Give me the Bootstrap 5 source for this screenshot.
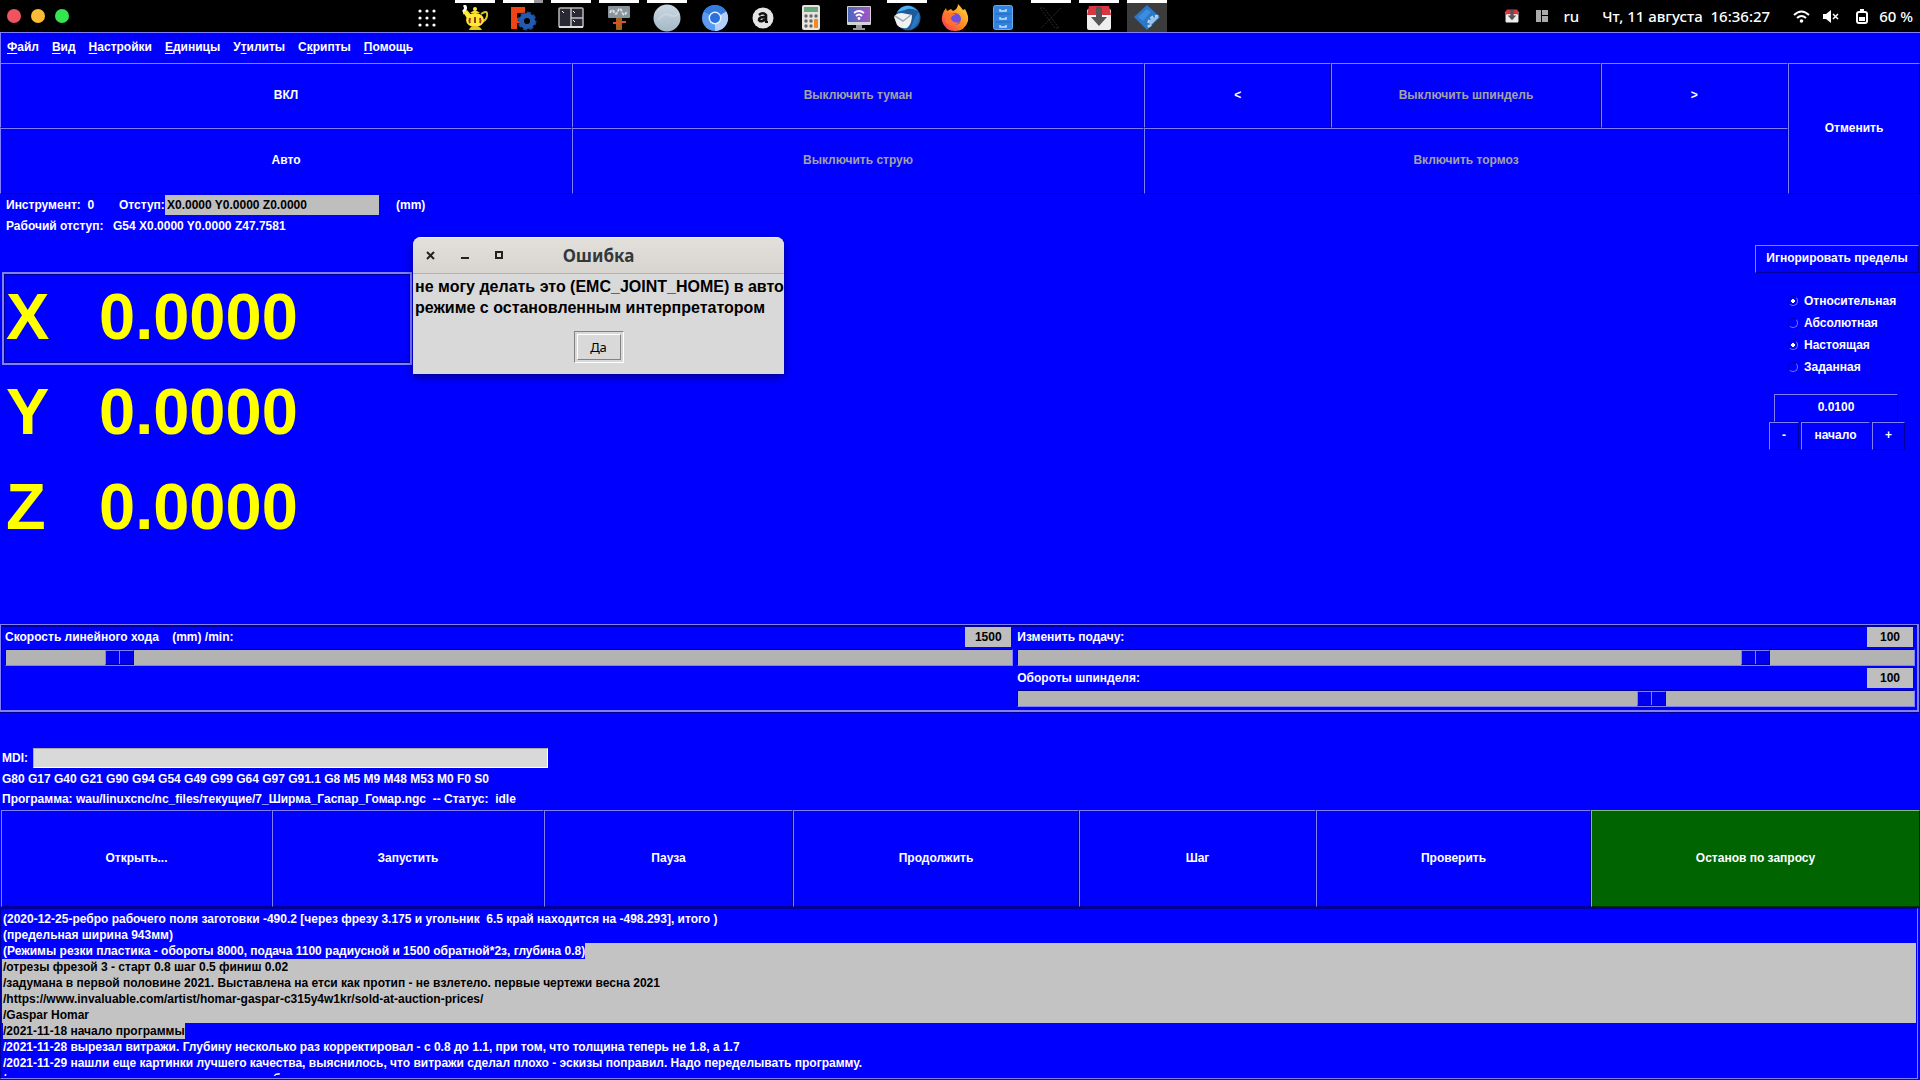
<!DOCTYPE html>
<html lang="ru">
<head>
<meta charset="utf-8">
<meta name="viewport" content="width=device-width, initial-scale=1">
<title>LinuxCNC</title>
<link href="https://cdn.jsdelivr.net/npm/bootstrap@5.3.0/dist/css/bootstrap.min.css" rel="stylesheet">
<style>
:root{--hi:#8080ff;--lo:#000099;--blue:#0000ff}
body{background:var(--blue);color:#fff;font:bold 12px/16px "Liberation Sans",Arial,sans-serif;min-height:100vh;overflow:hidden}
button,input{font:inherit;color:inherit;border-radius:0}
.topbar{height:32px;background:#000;font:500 15px/20px "Noto Sans",sans-serif}
.lights{flex:0 0 407px;padding-left:7px;gap:10px}
.dock{flex:none}
.tray{padding-right:7px}
.tray svg,.dock svg{display:block}
.dot{width:14px;height:14px;border-radius:50%;border:0;padding:0}
.dock a{width:40px;height:32px;display:flex;justify-content:center;align-items:center;border-top:3px solid transparent}
.dock a.run{border-top-color:#fff}
.dock a.cur{background:#3c3c3c}
.dock a.multi{border-image:linear-gradient(90deg,#fff 78%,#999 78%) 3 0 0 0}
.menus{height:31px;border-top:1px solid var(--hi);border-left:1px solid var(--hi);padding:0 6px 2px;gap:13px}
.menus a{color:#fff;text-decoration:none}
.menus u{text-underline-offset:2px}
.tk{background:var(--blue);border:1px solid;border-color:var(--hi) var(--lo) var(--lo) var(--hi);padding:0 0 2px;text-align:center;min-width:0}
.tk:disabled{color:#a3a3a3}
.tops{display:grid;grid-template-columns:572fr 572fr 644fr 132fr}
.pair{display:grid;grid-template-rows:65px 66px}
.spin{display:grid;grid-template-columns:187fr 269fr 187fr}
.offs{height:20px;width:214px;background:#bebebe;color:#000;border:0;padding:0 2px}
.info{padding-left:6px}
.dro{width:410px;margin-left:2px}
.axis{height:93px;margin-bottom:2px;border:2px solid transparent;padding:0 2px;font-size:65px;line-height:86px;color:#ff0;display:grid;grid-template-columns:93px 1fr}
.axis.sel{border-color:var(--hi);box-shadow:inset 1px 1px var(--lo),inset -1px -1px var(--lo)}
.panel2{padding-top:51px;width:165px}
.panel2 .lim{height:28px;width:164px}
.radios{margin:17px 0 0 33px}
.radios label{height:22px;display:flex;align-items:center;gap:6px}
.radios input{appearance:none;width:10px;height:10px;margin:0;border:1px solid;border-radius:50%;border-color:#0000b8 #7878ff #7878ff #0000b8;background:radial-gradient(circle,#fff 2px,transparent 2px) no-repeat}
.radios input:not(:checked){background:none}
.jog{margin:16px 0 0 14px;width:136px}
.jog .inc{height:27px;width:124px;margin-left:5px}
.jog .tk{height:28px}
.ovr{border:2px solid var(--hi);border-top-width:1px;border-left-width:1px;box-shadow:inset 1px 2px var(--lo),0 1px var(--lo);display:grid;grid-template-columns:1016fr 902fr;padding:1px 2px 4px 3px;height:88px;margin-right:1px}
.ovr .cap{height:21px;padding-left:1px}
.valbox{background:#bebebe;color:#000;width:46px;height:20px;line-height:20px;text-align:center;margin-right:2px}
.tkscale{appearance:none;display:block;background:#b3b3b3;height:17px;border:1px solid;border-color:var(--lo) var(--hi) var(--hi) var(--lo);margin:2px 0 1px 1px;padding:0;width:calc(100% - 1px)}
.tkscale::-webkit-slider-thumb{appearance:none;width:29px;height:15px;border:1px solid;border-color:var(--hi) var(--lo) var(--lo) var(--hi);background:linear-gradient(90deg,transparent 13px,var(--hi) 13px,var(--hi) 14px,transparent 14px),#0000ee}
.mdi{height:20px;width:515px;background:#d9d9d9;border:1px solid;border-color:#aaa #fff #fff #aaa;color:#000}
.runs{display:grid;grid-template-columns:271fr 272fr 249fr 286fr 237fr 275fr 329fr;height:98px;padding-left:1px;border-bottom:1px solid var(--lo)}
.runs .go{background:#006400;border-color:#7bbf7b #003200 #003200 #7bbf7b}
.prog{height:171px;border:1px solid;border-color:var(--lo) var(--hi) var(--hi) var(--lo);margin:0 2px 1px 0;padding:2px 1px 0;overflow:hidden}
.prog pre{font:inherit;margin:0;height:165px;overflow:hidden}
.prog span{display:block;height:16px;padding-left:1px;color:#fff}
.prog .g{background:#c3c3c3;color:#000}
.prog b{display:inline-block;height:16px}
.prog .g b{background:var(--blue);color:#fff}
.prog .e b{background:#c3c3c3;color:#000}
.errwin{position:absolute;left:413px;top:237px;width:371px;height:137px;background:#d9d9d9;color:#000;border-radius:8px 8px 0 0;box-shadow:0 3px 9px #0007;overflow:hidden}
.errhead{height:37px;background:linear-gradient(#e3e0dc,#d8d4d0);border-top:1px solid #f5f3f0;border-bottom:1px solid #b5b1ac;color:#33393b;position:relative;font:bold 17px/36px "Noto Sans",sans-serif;text-align:center}
.errhead div{position:absolute;left:12px;top:12px}
.errhead button{border:0;background:none;padding:0;width:12px;height:12px;line-height:0}
.errmsg{font-size:16px;line-height:21px;padding:2px 0 0 2px;white-space:pre;margin:0}
.okring{width:50px;height:32px;margin:13px auto 0;border:1px solid;border-color:#828282 #fff #fff #828282;padding:2px}
.okring button{width:100%;height:100%;background:#d9d9d9;border:1px solid;border-color:#fff #828282 #828282 #fff;padding:0;font:13px/20px "Noto Sans",sans-serif}
</style>
<script src="https://cdn.jsdelivr.net/npm/bootstrap@5.3.0/dist/js/bootstrap.bundle.min.js"></script>
</head>
<body class="d-flex flex-column">
<header class="topbar d-flex">
 <div class="lights d-flex align-items-center">
  <button class="dot" style="background:#ef5360" aria-label="Закрыть"></button><button class="dot" style="background:#fdbc35" aria-label="Свернуть"></button><button class="dot" style="background:#35e550" aria-label="Развернуть"></button>
 </div>
 <nav class="dock d-flex gap-2" aria-label="Док">
  <a href="#" aria-label="Приложения"><svg width="18" height="18" fill="#fff"><g id="r"><circle cx="2" cy="2" r="1.6"/><circle cx="9" cy="2" r="1.6"/><circle cx="16" cy="2" r="1.6"/></g><use href="#r" y="7"/><use href="#r" y="14"/></svg></a>
  <a class="run" href="#" aria-label="Чайник"><svg width="28" height="26"><path d="M3 0q3 3 0 6l1 3" stroke="#fff" stroke-width="3" fill="none"/><path d="M20 9q7-5 6 2-1 5-6 6" stroke="#d8c52b" stroke-width="2" fill="none"/><path d="M7 15L2 7 6 5l5 6z" fill="#ffe838"/><ellipse cx="14" cy="15" rx="9" ry="7" fill="#ffe838"/><path d="M9 8q5-5 10 0z" fill="#f9dc22"/><circle cx="14" cy="4" r="2" fill="#ffe838"/><path d="M8 25q1-4 6-4t7 4z" fill="#e6c91a"/><path d="M9 13q-1 3 0 5M14 12v6M19 13q1 3 0 5" stroke="#9f301b" stroke-width="2" fill="none"/></svg></a>
  <a class="run multi" href="#" aria-label="FreeCAD"><svg width="28" height="26"><path d="M2 2h14v6H8v5h6v5H8v6H2z" fill="#f04415"/><circle cx="18" cy="16" r="8" fill="none" stroke="#1d4a91" stroke-width="3" stroke-dasharray="4 2.2"/><circle cx="18" cy="16" r="5.5" fill="none" stroke="#245bae" stroke-width="5"/></svg></a>
  <a class="run" href="#" aria-label="Терминал"><svg width="26" height="22"><rect x="1" y="1" width="24" height="19" rx="1" fill="#292936" stroke="#b9b9b9" stroke-width="1.5"/><path d="M13 1v19M13 11h12" stroke="#c5c5c5" stroke-width="1.5"/><path d="M4 4l2 2M15 4l2 2M15 13l2 2" stroke="#fff"/><path d="M1 20h24" stroke="#ddd" stroke-width="2"/></svg></a>
  <a class="run" href="#" aria-label="Указатель"><svg width="24" height="26"><rect x="9" y="10" width="6" height="15" rx="1" fill="#a06325"/><rect x="1" y="1" width="22" height="12" rx="1" fill="#88949b"/><path d="M3 8q2-5 4-1t4-1 4 1 5-1" stroke="#ddd" stroke-width="2" fill="none" stroke-dasharray="3 1"/><path d="M6 18h5M14 17h5M11 20l2-4" stroke="#e94c25" stroke-width="2"/></svg></a>
  <a class="run" href="#" aria-label="Сфера"><svg width="28" height="28"><defs><linearGradient id="s" x2="0" y2="1"><stop stop-color="#cbd9e2"/><stop offset="1" stop-color="#a3b8c5"/></linearGradient></defs><circle cx="14" cy="14" r="13.5" fill="url(#s)"/><path d="M5 16q6-8 12-5t8-2" stroke="#d6e0e7" stroke-width="2" fill="none" opacity=".5"/></svg></a>
  <a href="#" aria-label="Chromium"><svg width="28" height="28"><circle cx="14" cy="14" r="13" fill="#5c99f0"/><path d="M14 14L2.700 7.500A13 13 0 0 1 25.300 7.500z" fill="#347be0"/><path d="M14 14l11.300-6.500A13 13 0 0 1 14 27z" fill="#b2cffa"/><circle cx="14" cy="14" r="6.500" fill="#e9f1ff"/><circle cx="14" cy="14" r="5" fill="#2b70dc"/></svg></a>
  <a href="#" aria-label="Amazon"><svg width="22" height="22"><circle cx="11" cy="11" r="10.500" fill="#e5e5e5"/><path d="M7 8q4-3.500 7 0v7M14 10q-7-.5-7 3 2 3 6-1" fill="none" stroke="#111" stroke-width="2.600"/><path d="M13 15h3" stroke="#111" stroke-width="2"/></svg></a>
  <a href="#" aria-label="Калькулятор"><svg width="18" height="26"><rect width="18" height="25" rx="2" fill="#e7e4df"/><rect x="2" y="2" width="14" height="5" fill="#66a87e"/><g fill="#666"><circle cx="4" cy="11" r="1.700"/><circle cx="9" cy="11" r="1.700"/><circle cx="14" cy="11" r="1.700"/><circle cx="4" cy="16" r="1.700"/><circle cx="9" cy="16" r="1.700"/><circle cx="4" cy="21" r="1.700"/><circle cx="9" cy="21" r="1.700"/></g><rect x="12" y="14" width="4" height="9" rx="1" fill="#f08b24"/></svg></a>
  <a href="#" aria-label="Удалённый экран"><svg width="26" height="26"><defs><linearGradient id="m" x2="1"><stop stop-color="#4b68ba"/><stop offset="1" stop-color="#a653c6"/></linearGradient></defs><rect x="1" y="1" width="24" height="19" rx="1" fill="#d3d3d3"/><rect x="2" y="2" width="22" height="15" fill="url(#m)"/><path d="M8 8q5-4 10 0M10 11q3-3 6 0" stroke="#fff" stroke-width="1.800" fill="none"/><circle cx="13" cy="13.500" r="1.400" fill="#fff"/><path d="M10 20h6v3h3v2H7v-2h3z" fill="#999"/></svg></a>
  <a class="run" href="#" aria-label="Thunderbird"><svg width="30" height="28"><circle cx="16" cy="14" r="12.500" fill="#1d5b9d"/><path d="M5 8Q14-4 26 7q-8-4-13-1" fill="#4eb0ef"/><path d="M2 13q2-4 8-4l10 2q0 9-5 13-6 1-10-3z" fill="#f1f1ef"/><path d="M3 12l8 5 8-6" fill="none" stroke="#9cadbb" stroke-width="1.500"/><path d="M27 8q2 12-9 18 3-8 5-13" fill="#2b78c2"/></svg></a>
  <a href="#" aria-label="Firefox"><svg width="28" height="28"><defs><linearGradient id="f" x1="1" x2="0" y2="1"><stop stop-color="#ffe23b"/><stop offset=".5" stop-color="#ff8b22"/><stop offset="1" stop-color="#f92767"/></linearGradient></defs><path d="M17 0q3 3 5 6l2-1q4 7 3 12-3 10-13 10T1 17Q0 10 5 4l1 3 4-2 2 2q5-2 5-7z" fill="url(#f)"/><circle cx="14" cy="15" r="6" fill="#704fe0"/><path d="M3 11q6-4 12 0-5 0-5 4 3 5 8 3-6 7-13 1z" fill="#ff7130"/></svg></a>
  <a href="#" aria-label="Картотека"><svg width="20" height="26"><rect x=".5" y=".5" width="19" height="24" rx="2" fill="#3283df" stroke="#65acef"/><path d="M2 9h16M2 17h16" stroke="#2468b4"/><path d="M7 4v2h6V4M7 12v2h6v-2M7 20v2h6v-2" fill="none" stroke="#c8e2ff" stroke-width="1.500"/></svg></a>
  <a class="run" href="#" aria-label="X"><svg width="24" height="24"><path d="M1 2h4l15 20h-4zM22 2L2 22" fill="none" stroke="#292929" stroke-dasharray="2 1"/></svg></a>
  <a class="run" href="#" aria-label="Загрузки"><svg width="26" height="26"><g id="dl"><rect x="1" y="4" width="24" height="21" rx="2" fill="#eee"/><path d="M3 1h20l2 9H1z" fill="#d93642"/><path d="M4 10h18v2H4z" fill="#fff"/><path d="M10 2h6v10h5l-8 9-8-9h5z" fill="#555"/></g></svg></a>
  <a class="run cur" href="#" aria-label="LinuxCNC"><svg width="28" height="28"><path d="M14 1l13 12-13 13L1 13z" fill="#2b78c9"/><path d="M25 13a7 7 0 0 0-8 10" fill="none" stroke="#add0ef" stroke-width="4" stroke-dasharray="3 1.500"/><path d="M26 13l-9 9q-3-9 9-9" fill="#98c2e8"/><path d="M5 13l9-8 4 3-8 9z" fill="#3e8ce0"/></svg></a>
 </nav>
 <div class="tray flex-grow-1 d-flex align-items-center justify-content-end">
  <svg width="14" height="14" viewBox="0 0 26 26" style="margin-right:17px"><use href="#dl"/></svg>
  <svg width="12" height="12" fill="#aaa" style="margin-right:16px"><path d="M0 0h5v12H0zM6 0h6v5H6zM6 6h6v6H6z"/></svg>
  <span style="margin-right:23px">ru</span><span style="margin-right:23px">Чт, 11 августа&nbsp; 16:36:27</span>
  <svg width="17" height="13" style="margin-right:13px"><path d="M1 5q7.500-7 15 0M4 8q4.500-4 9 0" fill="none" stroke="#fff" stroke-width="2"/><circle cx="8.500" cy="11" r="1.800" fill="#fff"/></svg>
  <svg width="16" height="13" style="margin-right:17px"><path d="M0 4h3l5-4v13L3 9H0z" fill="#fff"/><path d="M10 4l5 5M15 4l-5 5" stroke="#fff" stroke-width="1.500"/></svg>
  <svg width="12" height="15" style="margin-right:11px"><rect x="1" y="3" width="10" height="11" rx="2" fill="none" stroke="#fff" stroke-width="2"/><path d="M4 0h4v2H4zM3 8h6v4H3z" fill="#fff"/></svg>
  <span>60 %</span>
 </div>
</header>
<nav class="menus d-flex align-items-center">
 <a href="#"><u>Ф</u>айл</a><a href="#"><u>В</u>ид</a><a href="#"><u>Н</u>астройки</a><a href="#"><u>Е</u>диницы</a><a href="#">У<u>т</u>илиты</a><a href="#">С<u>к</u>рипты</a><a href="#"><u>П</u>омощь</a>
</nav>
<section class="tops">
 <div class="pair"><button class="tk">ВКЛ</button><button class="tk">Авто</button></div>
 <div class="pair"><button class="tk" disabled>Выключить туман</button><button class="tk" disabled>Выключить струю</button></div>
 <div class="pair"><div class="spin"><button class="tk">&lt;</button><button class="tk" disabled>Выключить шпиндель</button><button class="tk">&gt;</button></div><button class="tk" disabled>Включить тормоз</button></div>
 <button class="tk">Отменить</button>
</section>
<main class="flex-grow-1 d-flex justify-content-between">
 <div>
  <div class="info d-flex align-items-center" style="height:22px"><span style="width:113px">Инструмент:&nbsp; 0</span><label for="off" style="width:46px">Отступ:</label><input id="off" class="offs" value="X0.0000 Y0.0000 Z0.0000"><span style="margin-left:17px">(mm)</span></div>
  <div class="info d-flex align-items-center" style="height:20px"><span style="width:107px">Рабочий отступ:</span><span>G54 X0.0000 Y0.0000 Z47.7581</span></div>
  <div class="dro" style="margin-top:36px"><div class="axis sel"><span>X</span><span>0.0000</span></div><div class="axis"><span>Y</span><span>0.0000</span></div><div class="axis"><span>Z</span><span>0.0000</span></div></div>
 </div>
 <aside class="panel2">
  <button class="tk lim">Игнорировать пределы</button>
  <div class="radios"><label><input type="radio" name="rel" checked>Относительная</label><label><input type="radio" name="rel">Абсолютная</label><label><input type="radio" name="act" checked>Настоящая</label><label><input type="radio" name="act">Заданная</label></div>
  <div class="jog"><button class="tk inc d-block">0.0100</button><div class="d-flex" style="gap:2px"><button class="tk" style="width:30px">-</button><button class="tk flex-grow-1">начало</button><button class="tk" style="width:33px">+</button></div></div>
 </aside>
</main>
<section class="ovr">
 <div style="padding-right:3px"><div class="cap d-flex justify-content-between align-items-center"><label for="v1" style="white-space:pre">Скорость линейного хода    (mm) /min:</label><output class="valbox">1500</output></div><input id="v1" class="tkscale" type="range" max="14850" value="1500"></div>
 <div><div class="cap d-flex justify-content-between align-items-center"><label for="v2">Изменить подачу:</label><output class="valbox">100</output></div><input id="v2" class="tkscale" type="range" max="120" value="100"><div class="cap d-flex justify-content-between align-items-center"><label for="v3">Обороты шпинделя:</label><output class="valbox">100</output></div><input id="v3" class="tkscale" type="range" max="140" value="100"></div>
</section>
<section style="padding:36px 0 0 2px">
 <div class="d-flex align-items-center"><label for="mdi" style="width:31px">MDI:</label><input id="mdi" class="mdi"></div>
 <div style="padding:3px 0 4px">G80 G17 G40 G21 G90 G94 G54 G49 G99 G64 G97 G91.1 G8 M5 M9 M48 M53 M0 F0 S0</div>
 <div style="height:19px;white-space:pre">Программа: wau/linuxcnc/nc_files/текущие/7_Ширма_Гаспар_Гомар.ngc  -- Статус:  idle</div>
</section>
<section class="runs"><button class="tk">Открыть...</button><button class="tk">Запустить</button><button class="tk">Пауза</button><button class="tk">Продолжить</button><button class="tk">Шаг</button><button class="tk">Проверить</button><button class="tk go">Останов по запросу</button></section>
<section class="prog"><pre><span>(2020-12-25-ребро рабочего поля заготовки -490.2 [через фрезу 3.175 и угольник  6.5 край находится на -498.293], итого )</span><span>(предельная ширина 943мм)</span><span class="g ps-0"><b style="padding-left:1px">(Режимы резки пластика - обороты 8000, подача 1100 радиусной и 1500 обратной*2з, глубина 0.8)</b></span><span class="g">/отрезы фрезой 3 - старт 0.8 шаг 0.5 финиш 0.02</span><span class="g">/задумана в первой половине 2021. Выставлена на етси как протип - не взлетело. первые чертежи весна 2021</span><span class="g">/https://www.invaluable.com/artist/homar-gaspar-c315y4w1kr/sold-at-auction-prices/</span><span class="g">/Gaspar Homar</span><span class="e"><b>/2021-11-18 начало программы</b></span><span>/2021-11-28 вырезал витражи. Глубину несколько раз корректировал - с 0.8 до 1.1, при том, что толщина теперь не 1.8, а 1.7</span><span>/2021-11-29 нашли еще картинки лучшего качества, выяснилось, что витражи сделал плохо - эскизы поправил. Надо переделывать программу.</span><span>/                                                                                б</span></pre></section>
<div class="errwin" role="dialog" aria-label="Ошибка">
 <div class="errhead"><div class="d-flex" style="gap:22px"><button aria-label="Закрыть"><svg width="12" height="12"><path d="M2 2l7 7M9 2l-7 7" stroke="#222" stroke-width="2"/></svg></button><button aria-label="Свернуть"><svg width="12" height="12"><path d="M2 8h8" stroke="#222" stroke-width="2"/></svg></button><button aria-label="Развернуть"><svg width="12" height="12"><path d="M3 2h6v6H3z" stroke="#222" stroke-width="2" fill="none"/></svg></button></div>Ошибка</div>
 <p class="errmsg">не могу делать это (EMC_JOINT_HOME) в авто
режиме с остановленным интерпретатором</p>
 <div class="okring"><button>Да</button></div>
</div>
</body>
</html>
